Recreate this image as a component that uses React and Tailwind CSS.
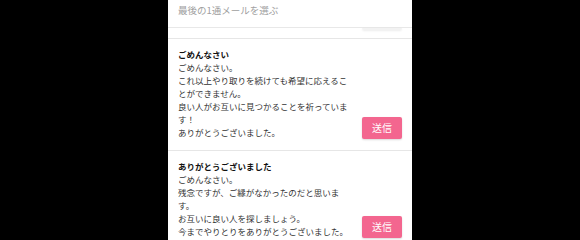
const messages = [
  {
    title: 'ごめんなさい',
    body: [
      'ごめんなさい。',
      'これ以上やり取りを続けても希望に応えることができません。',
      '良い人がお互いに見つかることを祈っています！',
      'ありがとうございました。',
    ],
  },
  {
    title: 'ありがとうございました',
    body: [
      'ごめんなさい。',
      '残念ですが、ご縁がなかったのだと思います。',
      'お互いに良い人を探しましょう。',
      '今までやりとりをありがとうございました。',
    ],
  },
];

function SendButton() {
  return (
    <button className="w-[40px] h-[22px] shrink-0 rounded-[2px] bg-[#f3668f] text-white text-[10px] leading-none shadow-[0_1px_2px_rgba(0,0,0,0.15)]">
      送信
    </button>
  );
}

function MessageRow({ title, body }) {
  return (
    <div className="flex items-end justify-between px-[10px] pt-[9px] pb-[11px] border-b border-[#e6e6e6]">
      <div className="w-[176px] text-[8.5px] leading-[13px] text-[#333]">
        <div className="font-bold text-[#111]">{title}</div>
        {body.map((line, i) => (
          <div key={i}>{line}</div>
        ))}
      </div>
      <SendButton />
    </div>
  );
}

export default function App() {
  return (
    <div
      className="w-[580px] h-[240px] bg-black flex justify-center overflow-hidden"
      style={{ fontFamily: '"Noto Sans CJK JP", "Noto Sans", sans-serif' }}
    >
      <div className="w-[244px] bg-white flex flex-col">
        <div className="h-[28px] shrink-0 px-[10px] pt-[3px] border-b border-[#e8e8e8] text-[9.5px] leading-[14px] text-[#a0a0a0]">
          最後の1通メールを選ぶ
        </div>
        <div className="h-[11px] shrink-0 border-b border-[#e6e6e6] flex justify-end pr-[10px]">
          <div className="w-[40px] h-[2px] rounded-b-[2px] bg-[#f2f2f2] shadow-[0_1px_2px_rgba(0,0,0,0.08)]" />
        </div>
        {messages.map((m, i) => (
          <MessageRow key={i} title={m.title} body={m.body} />
        ))}
      </div>
    </div>
  );
}
